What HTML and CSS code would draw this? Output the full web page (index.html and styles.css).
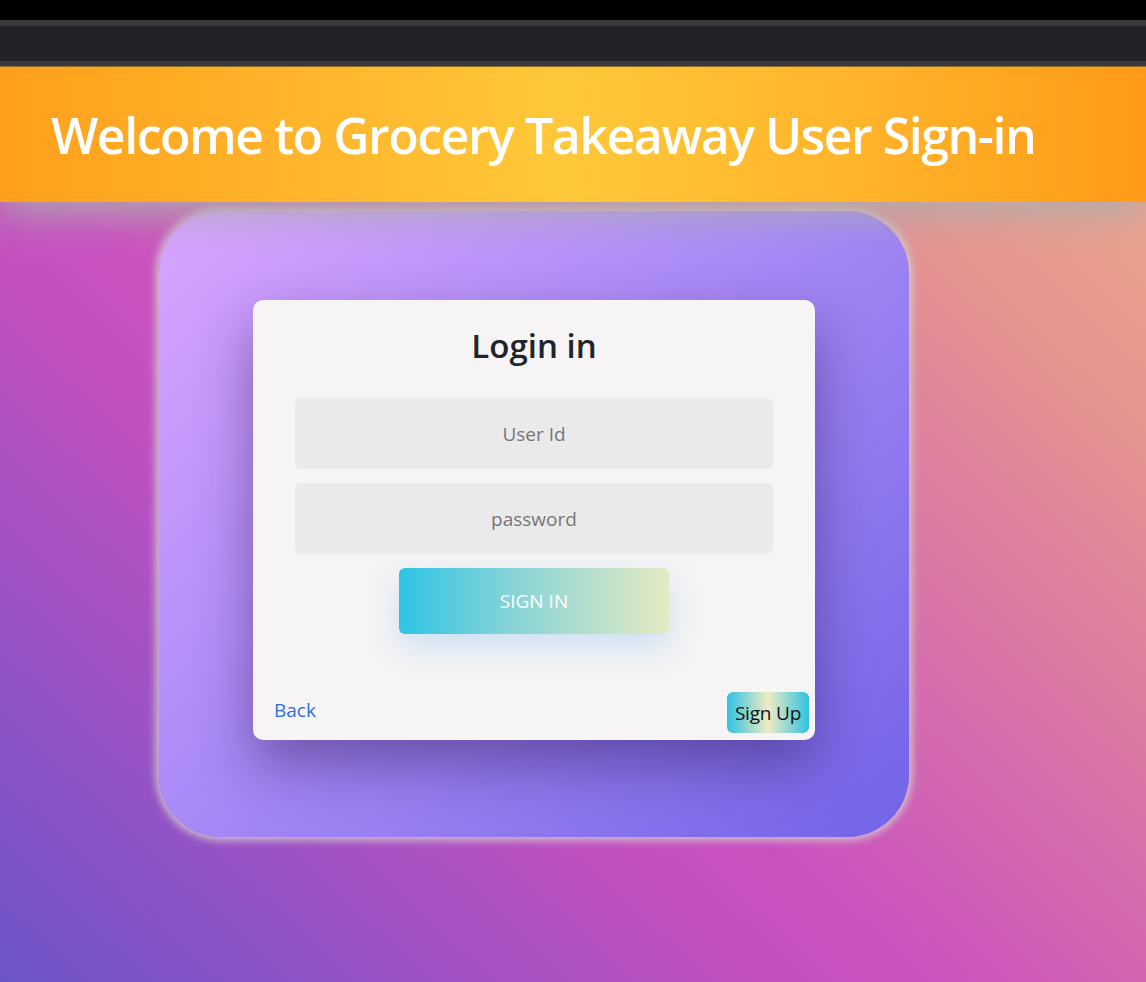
FILE: index.html
```html
<!DOCTYPE html>
<html lang="en">
<head>
<meta charset="utf-8">
<title>Grocery Takeaway - Sign in</title>
<link rel="stylesheet" href="styles.css">
</head>
<body>
  <div class="chrome">
    <div class="chrome-top"></div>
    <div class="chrome-line"></div>
    <div class="chrome-bar"></div>
    <div class="chrome-line"></div>
    <div class="chrome-edge"></div>
  </div>
  <header class="banner">
    <h1 class="banner-title">Welcome to Grocery Takeaway User Sign-in</h1>
  </header>
  <main class="stage">
    <div class="frame">
      <div class="card">
        <h2 class="card-title">Login in</h2>
        <form class="login-form">
          <input class="field" type="text" placeholder="User Id">
          <input class="field" type="password" placeholder="password">
          <button class="signin" type="button">SIGN IN</button>
        </form>
        <div class="card-foot">
          <a class="back-link" href="#">Back</a>
          <button class="signup" type="button">Sign Up</button>
        </div>
      </div>
    </div>
  </main>
</body>
</html>
```
FILE: styles.css
```css
* { box-sizing: border-box; }

html, body {
  margin: 0;
  padding: 0;
}

body {
  width: 1146px;
  height: 982px;
  overflow: hidden;
  font-family: "Open Sans", "Noto Sans", sans-serif;
  background: #000;
}

.chrome {
  position: relative;
  z-index: 2;
  display: flex;
  flex-direction: column;
}
.chrome-top { height: 20px; background: #000; }
.chrome-line { height: 6px; background: #3a3a3b; }
.chrome-line:nth-child(4) { height: 5px; }
.chrome-bar { height: 35px; background: #212226; }
.chrome-edge { height: 1px; background: #8d6a2c; }

.banner {
  position: relative;
  z-index: 1;
  height: 135px;
  display: flex;
  align-items: center;
  padding-left: 51px;
  background: linear-gradient(90deg, #ff9f1b 0%, #ffb42b 25%, #ffc83a 49%, #ffb42b 75%, #ff9a19 100%);
  box-shadow: 0 10px 40px rgba(172, 172, 175, 1);
}

.banner-title {
  margin: 0;
  color: #fff;
  font-size: 50px;
  font-weight: 600;
  letter-spacing: -1.45px;
  line-height: 1.2;
}

.stage {
  height: 780px;
  padding: 9px 0 0 159px;
  background: linear-gradient(43deg, #6c55c9 0%, #c250c0 38%, #c951bf 46%, #e6958f 88%, #eca38b 100%);
}

.frame {
  width: 750px;
  height: 626px;
  border-radius: 62px;
  padding-top: 89px;
  display: flex;
  justify-content: center;
  align-items: flex-start;
  background: linear-gradient(135deg, #d8a4ff 0%, #a98af6 45%, #7263e7 100%);
  box-shadow: 0 0 8px 3px rgba(210, 206, 210, 0.95);
}

.card {
  width: 562px;
  height: 440px;
  border-radius: 10px;
  background: #f6f4f5;
  padding: 26px 0 7px;
  display: flex;
  flex-direction: column;
  box-shadow: 0 25px 55px rgba(35, 15, 70, 0.42);
}

.card-title {
  margin: 0;
  text-align: center;
  font-size: 33px;
  font-weight: 600;
  line-height: 40px;
  color: #212529;
  letter-spacing: 0;
}

.login-form {
  margin-top: 32px;
  padding: 0 42px;
  display: flex;
  flex-direction: column;
  align-items: center;
  gap: 14px;
}

.field {
  width: 100%;
  height: 71px;
  border: none;
  border-radius: 6px;
  background: #eaeaea;
  text-align: center;
  font-family: inherit;
  font-size: 19px;
  color: #333;
  outline: none;
}
.field::placeholder { color: #767676; }

.signin {
  width: 270px;
  height: 66px;
  border: none;
  border-radius: 6px;
  background: linear-gradient(90deg, #2ec4e4 0%, #8dd5d6 45%, #e4ebc2 100%);
  color: #fff;
  font-family: inherit;
  font-size: 19px;
  box-shadow: 0 12px 30px rgba(120, 185, 240, 0.35);
}

.card-foot {
  margin-top: auto;
  display: flex;
  justify-content: space-between;
  align-items: flex-end;
  padding: 0 6px 0 21px;
}

.back-link {
  color: #2e6fdf;
  text-decoration: none;
  font-size: 19px;
  line-height: 24px;
  margin-bottom: 11px;
}

.signup {
  height: 41px;
  width: 82px;
  padding: 0;
  border: none;
  border-radius: 6px;
  background: linear-gradient(90deg, #2ec2e2 0%, #f0ebc3 50%, #2ec2e2 100%);
  color: #111;
  font-family: inherit;
  font-size: 19px;
  letter-spacing: -0.2px;
}
```
